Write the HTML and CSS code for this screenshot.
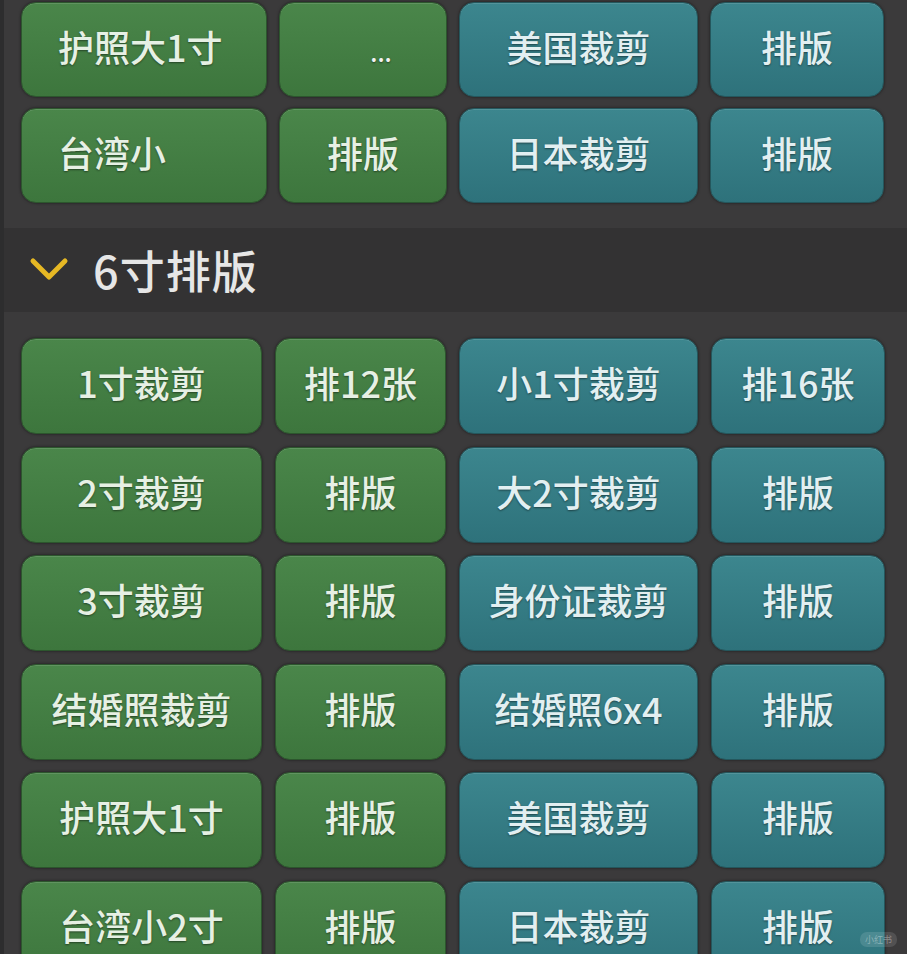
FILE: index.html
```html
<!DOCTYPE html>
<html>
<head>
<meta charset="UTF-8">
<meta name="viewport" content="width=device-width, initial-scale=1.0">
<title>证件照排版</title>
<link rel="stylesheet" href="styles.css">
</head>
<body>
	<div class="panel">
		<!-- previous group, scrolled up -->
		<div class="group group-top">
			<a href="#" class="btn green lead">护照大1寸</a>
			<a href="#" class="btn green dots">...</a>
			<a href="#" class="btn teal">美国裁剪</a>
			<a href="#" class="btn teal">排版</a>

			<a href="#" class="btn green lead">台湾小</a>
			<a href="#" class="btn green">排版</a>
			<a href="#" class="btn teal">日本裁剪</a>
			<a href="#" class="btn teal">排版</a>
		</div>

		<!-- 6 inch layout group -->
		<div class="group-head">
			<svg class="chevron" width="42" height="30" viewBox="0 0 42 30">
				<path d="M5 6 L21 22 L37 6" fill="none" stroke="#e6b824" stroke-width="5" stroke-linecap="round" stroke-linejoin="round"/>
			</svg>
			<span class="group-title">6寸排版</span>
		</div>

		<div class="group">
			<a href="#" class="btn green">1寸裁剪</a>
			<a href="#" class="btn green">排12张</a>
			<a href="#" class="btn teal">小1寸裁剪</a>
			<a href="#" class="btn teal">排16张</a>

			<a href="#" class="btn green">2寸裁剪</a>
			<a href="#" class="btn green">排版</a>
			<a href="#" class="btn teal">大2寸裁剪</a>
			<a href="#" class="btn teal">排版</a>

			<a href="#" class="btn green">3寸裁剪</a>
			<a href="#" class="btn green">排版</a>
			<a href="#" class="btn teal">身份证裁剪</a>
			<a href="#" class="btn teal">排版</a>

			<a href="#" class="btn green">结婚照裁剪</a>
			<a href="#" class="btn green">排版</a>
			<a href="#" class="btn teal">结婚照6x4</a>
			<a href="#" class="btn teal">排版</a>

			<a href="#" class="btn green">护照大1寸</a>
			<a href="#" class="btn green">排版</a>
			<a href="#" class="btn teal">美国裁剪</a>
			<a href="#" class="btn teal">排版</a>

			<a href="#" class="btn green">台湾小2寸</a>
			<a href="#" class="btn green">排版</a>
			<a href="#" class="btn teal">日本裁剪</a>
			<a href="#" class="btn teal">排版</a>
		</div>
	</div>

	<div class="mark">小红书</div>
</body>
</html>
```

FILE: styles.css
```css
body {
	margin: 0;
	padding: 0;
	background-color: #3b3a3b;
	font-family: "Noto Sans CJK SC", "Noto Sans", sans-serif;
	overflow: hidden;
}

/* Panel with a darker strip down the left side */
.panel {
	border-left: 4px solid #2d2d2e;
	min-height: 954px;
}

/* Styles for the button groups */
.group {
	display: grid;
	grid-template-columns: 241px 171px 239px 174px;
	grid-auto-rows: 96px;
	column-gap: 13px;
	row-gap: 12.6px;
	padding: 26px 0 0 17px;
}

.group-top {
	grid-template-columns: 246px 168px 239px 174px;
	grid-auto-rows: 95px;
	column-gap: 12px;
	row-gap: 11px;
	padding: 2px 0 25px 17px;
}

.group-head {
	display: flex;
	align-items: center;
	height: 84px;
	padding-left: 24px;
	background-color: #333233;
}

.chevron {
	margin-right: 23px;
}

.group-title {
	font-size: 45px;
	font-weight: 500;
	color: #e6e6e6;
	letter-spacing: 1px;
	padding-bottom: 2px;
}

/* Buttons */
.btn {
	display: flex;
	align-items: center;
	justify-content: center;
	padding-bottom: 8px;
	box-sizing: border-box;
	border-radius: 15px;
	text-decoration: none;
	font-size: 36px;
	font-weight: 500;
	white-space: nowrap;
	text-shadow: 0 1px 2px rgba(0, 0, 0, 0.45);
	box-shadow: 0 0 3px rgba(0, 0, 0, 0.55), inset 0 1px 0 rgba(255, 255, 255, 0.12);
}

.green {
	background: linear-gradient(#4a864a, #3d763d);
	border: 1px solid #2c562d;
	color: #e6f0e4;
}

.teal {
	background: linear-gradient(#3c868e, #2e727b);
	border: 1px solid #24575d;
	color: #e2eff1;
}

.lead {
	justify-content: flex-start;
	padding-left: 36px;
}

.dots {
	padding: 4px 0 0 36px;
	font-size: 24px;
	color: #f2f2f2;
}

/* Small watermark in the corner */
.mark {
	position: absolute;
	right: 10px;
	bottom: 7px;
	padding: 1px 5px;
	border-radius: 7px;
	background-color: rgba(255, 255, 255, 0.12);
	color: rgba(255, 255, 255, 0.35);
	font-size: 9px;
}
```
